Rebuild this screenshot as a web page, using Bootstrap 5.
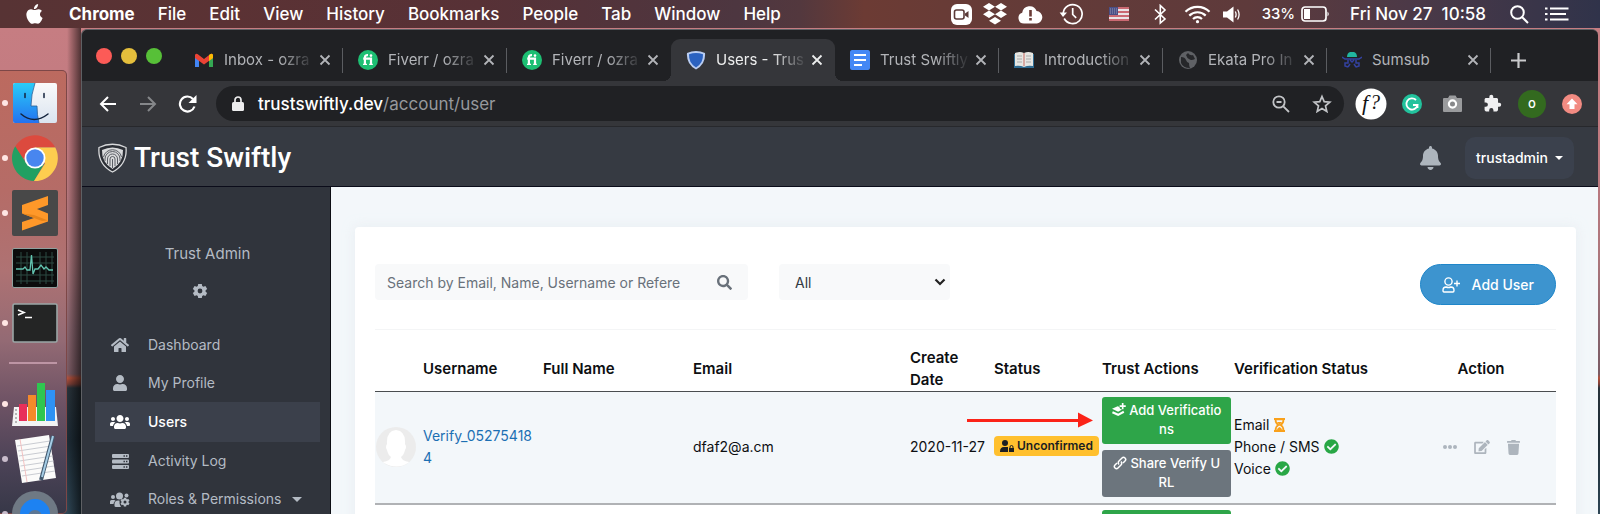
<!DOCTYPE html>
<html lang="en">
<head>
<meta charset="utf-8">
<meta name="viewport" content="width=device-width, initial-scale=1">
<title>Users - Trust Swiftly</title>
<link href="https://cdn.jsdelivr.net/npm/bootstrap@5.3.0/dist/css/bootstrap.min.css" rel="stylesheet">
<style>
  body { font-family: Inter, "Liberation Sans", sans-serif; font-size: 15px; line-height: 22px; color: #0d0f12; }
  svg { display: block; flex: none; }
  .desktop { height: 100vh; overflow: hidden; background: linear-gradient(#c67d82 28px, #c07a80 150px, #ac767c 260px, #8a6670 330px, #7b5b64 374px, #b4513c 378px, #7e4038 384px, #29333b 388px, #1e2c36 440px, #2f4655 100%); }
  .menubar { height: 28px; padding-left: 26px; padding-right: 29px; color: #fff; font-size: 17px; font-weight: 500; white-space: nowrap;
    background: linear-gradient(90deg, #573334, #5b3234 14%, #573136 30%, #4d3640 46%, #53383e 50%, #6c3b34 54%, #643b38 64%, #5e3a3b 78%, #4c3947 88%, #30334a); }
  .menubar a, .side-nav a { color: inherit; text-decoration: none; }
  .menus { gap: 23px; margin-left: 26px; }
  .dock { width: 67px; margin-top: 42px; padding-top: 4px; border: 1px solid #7d4747; border-left: 0; border-radius: 0 5px 5px 0;
    background: linear-gradient(#bc6a5f, #b56c67 120px, #ae7273 200px, #936a74 270px, #6f5365 330px, #4c4357 390px, #363747 445px); }
  .dock-item { height: 55px; padding-left: 2px; gap: 4px; }
  .running { width: 6px; height: 6px; border-radius: 50%; background: #ffe6e4; flex: none; }
  .running.idle { visibility: hidden; }
  .running.soft { background: #c9bccb; }
  .dock-rule { height: 2px; margin: 12px 9px; background: #bd95a4; }
  .mountain { width: 14px; background: linear-gradient(90deg, transparent, #0009); }
  .window { margin: 1px 2px 0 0; border: 1px solid #5e6064; border-bottom: 0; border-right: 0; border-radius: 6px 6px 0 0; overflow: hidden; background: #202124; }
  .tabstrip { height: 51px; }
  .lights { width: 97px; padding-left: 14px; gap: 9px; }
  .lights button { width: 16px; height: 16px; border: 0; padding: 0; border-radius: 50%; }
  .browser-tab { flex: 0 1 164px; min-width: 0; height: 42px; padding: 0 12px 0 15px; gap: 10px; color: #b2b4b8; font-size: 15px; position: relative; }
  .browser-tab .label { flex: 1 1 0; margin-right: -8px; overflow: hidden; white-space: nowrap; -webkit-mask-image: linear-gradient(90deg, #000 60%, transparent 98%); mask-image: linear-gradient(90deg, #000 60%, transparent 98%); }
  .browser-tab .label.full { -webkit-mask-image: none; mask-image: none; }
  .browser-tab.ruled::after { content: ""; position: absolute; right: 0; top: 9px; height: 25px; width: 1px; background: #5b5d61; }
  .browser-tab.current { background: #35363a; color: #eceded; border-radius: 9px 9px 0 0; }
  .browser-tab.current::before, .browser-tab.current::after { content: ""; position: absolute; bottom: 0; width: 8px; height: 8px; }
  .browser-tab.current::before { left: -8px; background: radial-gradient(circle at 0 0, transparent 8px, #35363a 8px); }
  .browser-tab.current::after { right: -8px; background: radial-gradient(circle at 100% 0, transparent 8px, #35363a 8px); }
  .bare { border: 0; padding: 0; background: none; color: inherit; }
  .new-tab { height: 42px; margin-left: 19px; }
  .toolbar { height: 45px; background: #35363a; padding: 0 11px 0 16px; }
  .toolbar .nav-buttons { gap: 20px; margin-right: 18px; }
  .omnibox { height: 35px; border-radius: 18px; background: #202124; padding: 0 12px; font-size: 17px; color: #96989c; }
  .omnibox b { font-weight: 500; color: #fff; }
  .lock { margin: 0 14px 0 4px; }
  .extensions { margin-left: 11px; gap: 10px; }
  .ext-slot { width: 30px; height: 30px; display: flex; align-items: center; justify-content: center; }
  .app-header { height: 61px; border-top: 1px solid #27282c; border-bottom: 1px solid #0b0c1a; background: #363a42; padding: 2px 24px 0 16px; }
  .brand { font: 500 28px/32px Roboto, sans-serif; color: #fff; text-decoration: none; gap: 7px; }
  .account-btn { background: #3b414d; color: #fff; border-radius: 10px; padding: 10px 11px; font-size: 14px; font-weight: 500; line-height: 22px; border: 0; }
  .account-btn::after { margin-left: 7px; vertical-align: 3px; }
  .sidebar { width: 249px; flex: none; background: #30343c; border-right: 1px solid #0d0e14; padding: 55px 10px 0 13px; color: #b4bbc4; }
  .sidebar .owner { line-height: 24px; }
  .gear { margin-top: 17px; padding-right: 16px; }
  .side-nav { margin-top: 27px; font-size: 14px; }
  .side-nav a { height: 38px; padding-left: 14px; gap: 17px; }
  .side-nav a.current { height: 40px; background: #3b404b; color: #fff; font-weight: 500; }
  .side-icon { width: 22px; display: flex; justify-content: center; }
  .caret { border: 5px solid transparent; border-top-color: currentColor; border-bottom: 0; margin-left: -6px; }
  .content { background: #f3f7fa; padding: 40px 22px 0 24px; }
  .panel { background: #fff; border-radius: 4px; padding: 37px 20px 0; box-shadow: 0 0 12px #dfe6ec90; min-height: 100%; }
  .search-box { width: 373px; background: #f8f9fa; border-radius: 4px; }
  .search-box input { height: 36px; border: 0; background: transparent; padding: 0 12px; font-size: 14px; color: #495057; box-shadow: none; }
  .search-box input::placeholder { color: #69717a; opacity: 1; }
  .filter { width: 171px; height: 36px; margin-left: 31px; border: 0; border-radius: 4px; padding: 0 16px; font-size: 14px; color: #333a42;
    background: #f8f9fa url("data:image/svg+xml,%3Csvg xmlns='http://www.w3.org/2000/svg' viewBox='0 0 12 8'%3E%3Cpath d='M1.500 1.500 6 6l4.500-4.500' fill='none' stroke='%23222' stroke-width='2.200'/%3E%3C/svg%3E") no-repeat right 4px center / 12px 8px; }
  .add-user { height: 41px; border: 1px solid #1f86c9; border-radius: 21px; background: #3d94cf; color: #fff; font-size: 14px; font-weight: 500; padding: 0 21px; gap: 12px; }
  .split { height: 1px; background: #f4f5f6; margin: 24px 0 12px; }
  .users { table-layout: fixed; width: 100%; margin: 0; font-size: 14px; }
  .users th { padding: 5px 0 0; font-size: 15px; font-weight: 600; vertical-align: middle; }
  .users thead tr { border-bottom: 1px solid #4a4d50; }
  .users td { padding: 5px 0 6px; vertical-align: middle; }
  .users tbody tr { border-bottom: 2px solid #b0b2b5; }
  .users tbody tr:nth-child(odd) { background: #f3f7fa; }
  .users td a { color: #1c6fb3; text-decoration: none; }
  .c-avatar { width: 48px; } .c-user { width: 120px; } .c-name { width: 150px; } .c-date { width: 84px; }
  .c-status { width: 108px; } .c-trust { width: 132px; } .c-verify { width: 172px; } .c-action { width: 150px; }
  .unconfirmed { display: inline-flex; align-items: center; gap: 3px; height: 20px; padding: 0 6px; border-radius: 4px; background: #ffc02e; color: #1b1e22; font-size: 12px; font-weight: 600; }
  .trust-btn { display: block; width: 129px; border-radius: 3px; padding: 4px 5px 5px; color: #fff; font-size: 13px; font-weight: 500; line-height: 19px; border: 0; }
  .trust-btn svg, .verify-line svg { display: inline-block; vertical-align: -2px; }
  .t-green { background: #2ea549; } .t-gray { background: #6c757d; margin-top: 6px; }
  .actions { gap: 17px; color: #adb5bd; }
  .pointer-cell { position: relative; }
  .pointer { position: absolute; left: 57px; top: 20px; }
  .gap-a { margin-left: 12px; } .gap-b { margin-right: 21px; } .gap-c { margin-left: 6px; } .gap-d { margin-right: 22px; }
</style>
</head>
<body>
<svg width="0" height="0" class="position-absolute" aria-hidden="true">
  <symbol id="x" viewBox="0 0 12 12"><path d="M1.500 1.500l9 9M10.500 1.500l-9 9" stroke="currentColor" stroke-width="1.800"/></symbol>
  <symbol id="fiverr" viewBox="0 0 20 20"><circle cx="10" cy="10" r="10" fill="#1dbf73"/><path d="M5.200 8.600H13v6M6.900 15V7.400c0-1.600 1-2.400 3.100-2.200" fill="none" stroke="#fff" stroke-width="2.200"/><path d="M5 14.400h4M11.200 14.400h3.600" stroke="#fff" stroke-width="1.200"/><circle cx="13" cy="5.600" r="1.300" fill="#fff"/></symbol>
  <symbol id="user" viewBox="0 0 448 512"><path fill="currentColor" d="M224 256c70.700 0 128-57.300 128-128S294.700 0 224 0 96 57.300 96 128s57.300 128 128 128zm89.600 32h-16.700c-22.200 10.200-46.900 16-72.900 16s-50.600-5.800-72.900-16h-16.700C60.200 288 0 348.200 0 422.400V464c0 26.500 21.500 48 48 48h352c26.500 0 48-21.500 48-48v-41.600c0-74.200-60.200-134.400-134.400-134.400z"/></symbol>
  <symbol id="search" viewBox="0 0 512 512"><path fill="currentColor" d="M505 442.700L405.300 343c-4.500-4.500-10.600-7-17-7H372c27.600-35.300 44-79.700 44-128C416 93.100 322.900 0 208 0S0 93.100 0 208s93.100 208 208 208c48.300 0 92.700-16.400 128-44v16.300c0 6.400 2.500 12.500 7 17l99.700 99.700c9.400 9.400 24.600 9.400 33.900 0l28.300-28.300c9.400-9.400 9.400-24.600.1-34zM208 336c-70.700 0-128-57.200-128-128 0-70.700 57.200-128 128-128 70.700 0 128 57.200 128 128 0 70.700-57.200 128-128 128z"/></symbol>
  <symbol id="check" viewBox="0 0 512 512"><path fill="#28a745" d="M504 256c0 136.967-111.033 248-248 248S8 392.967 8 256 119.033 8 256 8s248 111.033 248 248zM227.314 387.314l184-184c6.248-6.248 6.248-16.379 0-22.627l-22.627-22.627c-6.248-6.249-16.379-6.249-22.628 0L216 308.118l-70.059-70.059c-6.248-6.248-16.379-6.248-22.628 0l-22.627 22.627c-6.248 6.248-6.248 16.379 0 22.627l104 104c6.249 6.249 16.379 6.249 22.628.001z"/></symbol>
  <symbol id="cog" viewBox="0 0 16 16"><path fill="currentColor" fill-rule="evenodd" d="M6.200 1h3.600l.4 2 1.200.7 2-.7 1.800 3-1.600 1.300v1.400l1.600 1.300-1.800 3-2-.7-1.200.7-.4 2H6.200l-.4-2-1.200-.7-2 .7-1.800-3 1.600-1.300V7.300L.8 6l1.800-3 2 .7L5.800 3zM8 5.600a2.400 2.400 0 1 0 0 4.800 2.400 2.400 0 0 0 0-4.800z"/></symbol>
  <symbol id="stack" viewBox="0 0 16 16"><path fill="currentColor" d="M0 6.500l6.500-2.800 2 .8c.2 1.600 1.200 2.600 3 3L7 10z"/><path d="M.5 10.500L7 13.500l6.500-3.500" fill="none" stroke="currentColor" stroke-width="2.400"/><path d="M12.200 0v7M8.700 3.500h7" stroke="currentColor" stroke-width="1.900"/></symbol>
</svg>

<div class="desktop d-flex flex-column">
  <nav class="menubar d-flex align-items-center flex-shrink-0" aria-label="System menu">
    <svg width="17" height="21" viewBox="0 0 17 21" fill="#fff"><path d="M12.100 0c.1 1.300-.4 2.500-1.100 3.400C10.200 4.400 9.100 5 8 5c-.2-1.200.4-2.500 1.100-3.300C9.900.7 11.100.1 12.100 0zM15.900 7.100c-2.900 1.900-2.300 5.700.7 6.900-.6 1.700-1.400 3.200-2.500 4.600-1.700 1.900-2.700.7-4.800.6-2.100 0-3 1.500-4.800 0C2.200 17.300.6 14 .4 11.200c-.2-3.400 1.700-5.900 4.600-6 1.500 0 2.600.9 3.600.9 1.200 0 2.500-1.100 4.300-.9 1.100.1 2.300.7 3 1.900z"/></svg>
    <div class="menus d-flex">
      <a href="#" class="fw-bold">Chrome</a><a href="#">File</a><a href="#">Edit</a><a href="#">View</a><a href="#">History</a><a href="#">Bookmarks</a><a href="#">People</a><a href="#">Tab</a><a href="#">Window</a><a href="#">Help</a>
    </div>
    <div class="d-flex align-items-center ms-auto">
      <svg width="21" height="21" viewBox="0 0 21 21"><rect width="21" height="21" rx="6" fill="#fff"/><rect x="3.500" y="6" width="9.500" height="9" rx="2" fill="none" stroke="#5b3a38" stroke-width="1.600"/><path d="M14 9.500l3.500-2.600v7.200L14 11.500z" fill="#5b3a38"/></svg>
      <svg class="mx-2" width="30" height="22" viewBox="-3 0 30 22" fill="#fff"><path d="M6 0l6 3.700-6 3.700-6-3.700zM18 0l6 3.700-6 3.700-6-3.700zM6 7.600l6 3.700L6 15l-6-3.700zM18 7.600l6 3.700-6 3.700-6-3.700zM12 14l6 3.700-6 3.800-6-3.800z"/></svg>
      <svg width="25" height="19" viewBox="0 0 25 19"><path d="M6 18.500a5.500 5.500 0 0 1-1.800-10.700A7.500 7.500 0 0 1 18.600 6 6.300 6.300 0 0 1 19 18.500z" fill="#fff"/><path d="M12.500 5v6.500M12.500 13v2.600" stroke="#6a3b36" stroke-width="2.600"/></svg>
      <svg class="ms-3" width="26" height="22" viewBox="0 0 26 22" fill="none" stroke="#fff" stroke-width="1.700"><path d="M5.200 15.500A9.500 9.500 0 1 0 4.200 10"/><path d="M.6 9.500h7.400L4 14z" fill="#fff" stroke="none"/><path d="M13.700 5v6.500l3.500 3.400"/></svg>
      <svg class="ms-4" width="20" height="14" viewBox="0 0 20 14"><rect width="20" height="14" fill="#e9e4e6"/><path d="M0 1h20M0 5h20M0 9h20M0 13h20" stroke="#c0404c" stroke-width="1.600"/><rect width="9" height="8" fill="#4a4f86"/><path d="M1 2h7M1 4h7M1 6h7" stroke="#aab" stroke-width=".8" stroke-dasharray="1"/></svg>
      <svg class="ms-4" width="15" height="21" viewBox="0 0 15 21" fill="none" stroke="#fff" stroke-width="1.600"><path d="M2 5.500l10 9.500-4.700 4V1.500L12 6 2 15.500"/></svg>
      <svg class="ms-3" width="27" height="19" viewBox="0 0 27 19" fill="none" stroke="#fff" stroke-width="2.200"><path d="M1.500 6.800a17 17 0 0 1 24 0M5.300 10.600a11.700 11.700 0 0 1 16.400 0M9 14a6.500 6.500 0 0 1 9 0"/><circle cx="13.500" cy="16.700" r="1.600" fill="#fff" stroke="none"/></svg>
      <svg class="gap-a gap-b" width="18" height="17" viewBox="0 0 18 17"><path d="M0 5.500h4L10.500.5v16L4 11.500H0z" fill="#fff"/><path d="M12.300 5.500q1.600 3 0 6M14.600 3.500q3 5 0 10" fill="none" stroke="#fff" stroke-width="1.300"/></svg>
      <small>33%</small>
      <svg class="gap-c" width="29" height="16" viewBox="0 0 29 16"><rect x="1" y="1" width="24" height="14" rx="3" fill="none" stroke="#fff" stroke-width="1.700"/><rect x="3" y="3" width="6" height="10" fill="#fff"/><path d="M26.500 5.500q2.500 2.500 0 5z" fill="#fff"/></svg>
      <span class="ms-3 ps-1">Fri Nov 27&nbsp; 10:58</span>
      <svg class="ms-4" width="19" height="19" viewBox="0 0 19 19" fill="none" stroke="#fff" stroke-width="2"><circle cx="7.500" cy="7.500" r="6.300"/><path d="M12 12l6 6"/></svg>
      <svg class="ms-3" width="26" height="14" viewBox="0 0 26 14" stroke="#fff" stroke-width="2"><path d="M0 1.500h2.500M0 7h2.500M0 12.500h2.500M5 1.500h18.500M5 7h16M5 12.500h18.500"/></svg>
    </div>
  </nav>

  <div class="d-flex flex-grow-1 overflow-hidden">
    <aside class="dock flex-shrink-0" aria-label="Dock">
      <div class="dock-item d-flex align-items-center"><i class="running"></i>
        <svg width="46" height="46" viewBox="0 0 46 46"><defs><linearGradient id="fa" x2="0" y2="1"><stop stop-color="#29cdf8"/><stop offset="1" stop-color="#2472f0"/></linearGradient><linearGradient id="fb" x2="0" y2="1"><stop stop-color="#fafafa"/><stop offset="1" stop-color="#dae4f0"/></linearGradient></defs><rect x="1" y="3" width="44" height="40" rx="2" fill="url(#fb)"/><path d="M3 3h20q-4 12-4 23h6q0 9 2 17H3q-2 0-2-2V5q0-2 2-2z" fill="url(#fa)"/><path d="M23 3q-4 12-4 23h6q0 9 2 17" fill="none" stroke="#2b5f96" stroke-width=".8"/><path d="M13 13.500v4M32 13.500v4M9 34q13 11 27 0" fill="none" stroke="#13233c" stroke-width="1.500" stroke-linecap="round"/></svg></div>
      <div class="dock-item d-flex align-items-center"><i class="running"></i>
        <svg width="46" height="46" viewBox="0 0 46 46"><path d="M23 23H3.500V11A23 23 0 0 1 43 12H23z" fill="#dc4a3e"/><path d="M3.200 11.300A23 23 0 0 0 22 46l10-17-18-1z" fill="#21a062"/><path d="M43.300 12.500H23l10 16-11 17.500A23 23 0 0 0 43.300 12.500z" fill="#fdcd4f"/><circle cx="23" cy="23" r="10.500" fill="#fff"/><circle cx="23" cy="23" r="8.700" fill="#4886ef"/></svg></div>
      <div class="dock-item d-flex align-items-center"><i class="running"></i>
        <svg width="46" height="46" viewBox="0 0 46 46"><rect width="46" height="46" rx="2" fill="#484848"/><path d="M10 15l26-9v9L25 19l11 4.500v8L10 40.500V32l12-4-12-4.500z" fill="#ff9829"/><path d="M10 23.500L22 28l8 3 6-.5-14-5.500z" fill="#e8851b"/></svg></div>
      <div class="dock-item d-flex align-items-center"><i class="running idle"></i>
        <svg width="46" height="40" viewBox="0 0 46 40"><rect x=".5" y=".5" width="45" height="39" rx="1.500" fill="#0b0c0c" stroke="#8fa09d"/><path d="M4 9h38M4 15h38M4 27h38M4 33h38M9 4v32M15 4v32M28 4v32M34 4v32M40 4v32" stroke="#2c4a43" stroke-width="1"/><path d="M4 21h7l2-2 2 3h3l1.500-15 1.500 19 2-5h3l3-4 3 4 2-2 3 3h4" fill="none" stroke="#62c4b0" stroke-width="1.300"/></svg></div>
      <div class="dock-item d-flex align-items-center"><i class="running"></i>
        <svg width="46" height="40" viewBox="0 0 46 40"><rect x="1" y="1" width="44" height="38" rx="1.500" fill="#242525" stroke="#9aa6a6" stroke-width="1.600"/><path d="M6 7l6 2.500L6 12M13 14.500h7" fill="none" stroke="#fff" stroke-width="1.600"/></svg></div>
      <div class="dock-rule"></div>
      <div class="dock-item d-flex align-items-center"><i class="running"></i>
        <svg width="46" height="46" viewBox="0 0 46 46"><path d="M2 26h42l2 19H0z" fill="#f3f3f3"/><path d="M4 28v14" stroke="#777" stroke-dasharray="2"/><rect x="7" y="23" width="8" height="17" fill="#e8305a"/><rect x="16" y="14" width="8" height="26" fill="#f58a2a"/><rect x="25" y="2" width="8" height="38" fill="#2fc650"/><rect x="34" y="9" width="9" height="31" fill="#2e92f4"/></svg></div>
      <div class="dock-item d-flex align-items-center"><i class="running soft"></i>
        <svg width="46" height="50" viewBox="0 0 46 50"><path d="M3 6l34-5 7 43-34 5z" fill="#fbfbfa"/><path d="M5 12l33-5M6 17l33-5M7 22l33-5M7.500 27l33-5M8.500 32l33-5M9 37l33-5M10 42l33-5" stroke="#c9ccd2" stroke-width="1"/><path d="M8 5l7 43" stroke="#f3c2c2"/><path d="M41 2L29 46" stroke="#42586e" stroke-width="4"/><path d="M41 2L30 43" stroke="#a5cde6" stroke-width="2"/></svg></div>
      <div class="dock-item d-flex align-items-center"><i class="running soft"></i>
        <svg width="46" height="46" viewBox="0 0 46 46"><circle cx="23" cy="23" r="23" fill="#6f7984"/><circle cx="23" cy="23" r="15" fill="#1d82f2"/><circle cx="23" cy="26" r="7" fill="#5c7795"/></svg></div>
    </aside>
    <div class="mountain flex-shrink-0" aria-hidden="true"></div>

    <div class="window flex-grow-1 d-flex flex-column">
      <div class="tabstrip d-flex align-items-end flex-shrink-0">
        <div class="lights d-flex align-items-center align-self-stretch flex-shrink-0">
          <button style="background:#fc5b57" aria-label="Close"></button><button style="background:#e5bf3c" aria-label="Minimize"></button><button style="background:#57c038" aria-label="Zoom"></button>
        </div>
        <div class="browser-tab ruled d-flex align-items-center"><svg width="20" height="14" viewBox="0 0 20 14"><path d="M1 2v12h4V6z" fill="#4285f4"/><path d="M19 2v12h-4V6z" fill="#34a853"/><path d="M1 2.500Q1 0 3.500 1L10 6l6.500-5Q19 0 19 2.500V5l-9 6.500L1 5z" fill="#ea4335"/><path d="M15 2l1.500-1Q19 0 19 2.500V5l-4 3z" fill="#fbbc04"/></svg><span class="label">Inbox - ozra</span><button class="bare" aria-label="Close tab"><svg width="12" height="12"><use href="#x"/></svg></button></div>
        <div class="browser-tab ruled d-flex align-items-center"><svg width="20" height="20"><use href="#fiverr"/></svg><span class="label">Fiverr / ozra</span><button class="bare" aria-label="Close tab"><svg width="12" height="12"><use href="#x"/></svg></button></div>
        <div class="browser-tab d-flex align-items-center"><svg width="20" height="20"><use href="#fiverr"/></svg><span class="label">Fiverr / ozra</span><button class="bare" aria-label="Close tab"><svg width="12" height="12"><use href="#x"/></svg></button></div>
        <div class="browser-tab current d-flex align-items-center"><svg width="20" height="20" viewBox="0 0 20 20"><path d="M1 3q9-4 18 0 1 11-9 16.500Q0 14 1 3z" fill="#b9cdf2"/><path d="M3 4.300q7-2.800 14 0 .5 8.700-7 13.200Q2.500 13 3 4.300z" fill="#2b62c0"/></svg><span class="label">Users - Trus</span><button class="bare" aria-label="Close tab"><svg width="12" height="12"><use href="#x"/></svg></button></div>
        <div class="browser-tab ruled d-flex align-items-center"><svg width="20" height="20" viewBox="0 0 20 20"><rect width="20" height="20" rx="2" fill="#4487f5"/><path d="M4 5h12M4 10h12M4 15h8" stroke="#fff" stroke-width="2.200"/></svg><span class="label">Trust Swiftly</span><button class="bare" aria-label="Close tab"><svg width="12" height="12"><use href="#x"/></svg></button></div>
        <div class="browser-tab ruled d-flex align-items-center"><svg width="20" height="16" viewBox="0 0 20 16"><path d="M0 2h20v14H0z" fill="#2f6c93"/><path d="M1 1q5-2 9 0 4-2 9 0v13q-5-1-9 1-4-2-9-1z" fill="#e6e6e2"/><path d="M3 4h5M3 7h5M3 10h5M12 4h5M12 7h5M12 10h5" stroke="#aaa"/><path d="M10 1v13" stroke="#c86a62"/></svg><span class="label">Introduction</span><button class="bare" aria-label="Close tab"><svg width="12" height="12"><use href="#x"/></svg></button></div>
        <div class="browser-tab ruled d-flex align-items-center"><svg width="20" height="20" viewBox="0 0 20 20"><circle cx="10" cy="10" r="9" fill="#5f6165"/><path d="M3 7q4 0 5 3t3 3q0 3 1 5-7 0-9-5zM10 3q2 3 5 2l2 4q-4 2-6 0-2-1-3-4z" fill="#26272a"/></svg><span class="label">Ekata Pro In</span><button class="bare" aria-label="Close tab"><svg width="12" height="12"><use href="#x"/></svg></button></div>
        <div class="browser-tab ruled d-flex align-items-center"><svg width="20" height="16" viewBox="0 0 20 16"><path d="M5 5q0-4 3-5h4q3 1 3 5z" fill="#21b5a0"/><path d="M0 5l3 2h14l3-2M6 8v3H3v3l3 1M14 8v3h3v3l-3 1M8 8l2 2 2-2M8 12l-2 3M12 12l2 3" fill="none" stroke="#3341a0" stroke-width="1.500"/></svg><span class="label full">Sumsub</span><button class="bare" aria-label="Close tab"><svg width="12" height="12"><use href="#x"/></svg></button></div>
        <button class="bare new-tab" aria-label="New tab"><svg width="17" height="17" viewBox="0 0 17 17"><path d="M8.500 1v15M1 8.500h15" stroke="#c9cacc" stroke-width="2.200"/></svg></button>
      </div>

      <div class="toolbar d-flex align-items-center flex-shrink-0">
        <div class="nav-buttons d-flex align-items-center text-white">
          <button class="bare" aria-label="Back"><svg width="20" height="18" viewBox="0 0 20 18"><path d="M18 9H3M10 2L3 9l7 7" fill="none" stroke="#fff" stroke-width="2"/></svg></button>
          <button class="bare" aria-label="Forward"><svg width="20" height="18" viewBox="0 0 20 18"><path d="M2 9h15M10 2l7 7-7 7" fill="none" stroke="#85878a" stroke-width="2"/></svg></button>
          <button class="bare" aria-label="Reload"><svg width="20" height="18" viewBox="0 0 20 18"><path d="M16.500 11.500A7.500 7.500 0 1 1 15 4" fill="none" stroke="#fff" stroke-width="2.200"/><path d="M18.500 0v8h-8z" fill="#fff"/></svg></button>
        </div>
        <div class="omnibox flex-grow-1 d-flex align-items-center">
          <svg class="lock" width="12" height="16" viewBox="0 0 12 16"><rect y="6" width="12" height="9" rx="1.500" fill="#ededee"/><path d="M3 7V4a3 3 0 0 1 6 0v3" fill="none" stroke="#ededee" stroke-width="1.700"/></svg>
          <span><b>trustswiftly.dev</b>/account/user</span>
          <div class="ms-auto d-flex align-items-center text-light">
            <svg class="gap-d" width="18" height="18" viewBox="0 0 18 18" fill="none" stroke="#c2c4c7" stroke-width="1.800"><circle cx="7" cy="7" r="5.700"/><path d="M4.500 7h5M11.300 11.300L17 17"/></svg>
            <svg width="20" height="20" viewBox="0 0 20 20"><path d="M10 2.500l2.200 5.200 5.600.5-4.300 3.700 1.300 5.500L10 14.500l-4.800 2.900 1.300-5.500L2.200 8.200l5.600-.5z" fill="none" stroke="#c2c4c7" stroke-width="1.700"/></svg>
          </div>
        </div>
        <div class="extensions d-flex align-items-center">
          <svg width="32" height="32" viewBox="0 0 32 32"><circle cx="16" cy="16" r="15.500" fill="#fff"/><text x="7" y="22" font-family="Liberation Serif, serif" font-size="22" font-style="italic" font-weight="500" fill="#111">f</text><text x="15" y="21" font-family="Liberation Serif, serif" font-size="20" font-style="italic" fill="#111">?</text></svg>
          <span class="ext-slot"><svg width="20" height="20" viewBox="0 0 20 20"><circle cx="10" cy="10" r="10" fill="#22c29c"/><path d="M14 6a5.600 5.600 0 1 0 1.500 5H11M15.500 10.500V14" fill="none" stroke="#fff" stroke-width="1.800"/></svg></span>
          <span class="ext-slot"><svg width="19" height="17" viewBox="0 0 19 17"><path d="M5 3l1.500-2.500h6L14 3h4q1 0 1 1v12q0 1-1 1H1q-1 0-1-1V4q0-1 1-1z" fill="#9a9b9d"/><circle cx="9.500" cy="9" r="3.600" fill="#88898b" stroke="#fff" stroke-width="2.200"/></svg></span>
          <span class="ext-slot"><svg width="19" height="19" viewBox="0 0 24 24"><path d="M20.500 11H19V7c0-1.100-.9-2-2-2h-4V3.500a2.500 2.500 0 0 0-5 0V5H4c-1.100 0-2 .9-2 2v3.800h1.500a2.700 2.700 0 0 1 0 5.400H2V20c0 1.100.9 2 2 2h3.800v-1.500a2.700 2.700 0 0 1 5.400 0V22H17c1.100 0 2-.9 2-2v-4h1.500a2.500 2.500 0 0 0 0-5z" fill="#f0f0f1"/></svg></span>
          <svg width="30" height="30" viewBox="0 0 30 30"><circle cx="15" cy="15" r="14" fill="#336a1f"/><text x="15" y="19" text-anchor="middle" font-size="13" font-weight="500" fill="#fff">o</text></svg>
          <svg width="30" height="20" viewBox="-5 0 30 20"><circle cx="10" cy="10" r="10" fill="#f28b82"/><path d="M10 4.500l5.500 5.700h-3V15h-5v-4.800h-3z" fill="#fff"/></svg>
        </div>
      </div>

      <header class="app-header d-flex align-items-center flex-shrink-0">
        <a href="#" class="brand d-flex align-items-center">
          <svg width="29" height="30" viewBox="0 0 29 30" fill="none"><path d="M1 4.500Q14.500-2 28 4.500 29.500 21 14.500 29-.5 21 1 4.500z" fill="#2b2e35" stroke="#d8d9db" stroke-width="1.300"/><path d="M4 7q10.500-5 21 0 .5 12.500-10.500 19Q3.500 19.500 4 7z" fill="#d9dadc"/><path d="M5.500 14a9.200 9.200 0 0 1 18 0M7 18v-2a7.500 7.500 0 0 1 15 0v2M9.500 21v-5a5 5 0 0 1 10 0v5M12 23v-7a2.500 2.500 0 0 1 5 0v7M14.500 16v9" stroke="#4c4f56" stroke-width=".9"/></svg>
          Trust Swiftly</a>
        <button class="bare ms-auto me-4" aria-label="Notifications"><svg width="21" height="24" viewBox="0 0 448 512"><path fill="#adb5bd" d="M224 512c35.320 0 63.970-28.650 63.970-64H160.030c0 35.350 28.650 64 63.970 64zm215.390-149.710c-19.320-20.760-55.470-51.990-55.470-154.290 0-77.700-54.480-139.900-127.940-155.160V32c0-17.670-14.320-32-31.980-32s-31.980 14.330-31.980 32v20.840C118.560 68.100 64.080 130.300 64.080 208c0 102.300-36.150 133.530-55.470 154.290-6 6.450-8.660 14.160-8.610 21.710.11 16.400 12.980 32 32.100 32h383.800c19.120 0 32-15.600 32.100-32 .05-7.550-2.610-15.270-8.610-21.710z"/></svg></button>
        <button class="account-btn dropdown-toggle">trustadmin</button>
      </header>

      <div class="d-flex flex-grow-1 overflow-hidden">
        <nav class="sidebar" aria-label="Admin">
          <div class="owner text-center">Trust Admin</div>
          <button class="bare gear d-block mx-auto" aria-label="Settings"><svg width="16" height="16"><use href="#cog"/></svg></button>
          <div class="side-nav">
            <a href="#" class="d-flex align-items-center"><span class="side-icon"><svg width="18" height="16" viewBox="0 0 576 512"><path fill="currentColor" d="M280.370 148.260L96 300.110V464a16 16 0 0 0 16 16l112.060-.29a16 16 0 0 0 15.920-16V368a16 16 0 0 1 16-16h64a16 16 0 0 1 16 16v95.640a16 16 0 0 0 16 16.050L464 480a16 16 0 0 0 16-16V300L295.670 148.260a12.190 12.190 0 0 0-15.300 0zM571.600 251.470L488 182.560V44.050a12 12 0 0 0-12-12h-56a12 12 0 0 0-12 12v72.610L318.470 43a48 48 0 0 0-61 0L4.340 251.470a12 12 0 0 0-1.600 16.900l25.500 31A12 12 0 0 0 45.150 301l235.220-193.740a12.190 12.190 0 0 1 15.300 0L530.900 301a12 12 0 0 0 16.900-1.600l25.500-31a12 12 0 0 0-1.700-16.930z"/></svg></span>Dashboard</a>
            <a href="#" class="d-flex align-items-center"><span class="side-icon"><svg width="14" height="16"><use href="#user"/></svg></span>My Profile</a>
            <a href="#" class="current d-flex align-items-center"><span class="side-icon"><svg width="20" height="16" viewBox="0 0 640 512"><path fill="currentColor" d="M96 224c35.300 0 64-28.700 64-64s-28.700-64-64-64-64 28.700-64 64 28.700 64 64 64zm448 0c35.300 0 64-28.700 64-64s-28.700-64-64-64-64 28.700-64 64 28.700 64 64 64zm32 32h-64c-17.600 0-33.500 7.100-45.100 18.600 40.300 22.100 68.900 62 75.100 109.400h66c17.700 0 32-14.300 32-32v-32c0-35.300-28.700-64-64-64zm-256 0c61.900 0 112-50.100 112-112S381.900 32 320 32 208 82.100 208 144s50.100 112 112 112zm76.800 32h-8.300c-20.800 10-43.900 16-68.500 16s-47.600-6-68.500-16h-8.300C179.600 288 128 339.600 128 403.200V432c0 26.500 21.500 48 48 48h288c26.500 0 48-21.500 48-48v-28.800c0-63.600-51.600-115.200-115.200-115.200zm-223.700-13.400C161.500 263.100 145.600 256 128 256H64c-35.300 0-64 28.700-64 64v32c0 17.700 14.300 32 32 32h65.900c6.300-47.400 34.900-87.300 75.200-109.400z"/></svg></span>Users</a>
            <a href="#" class="d-flex align-items-center"><span class="side-icon"><svg width="17" height="15" viewBox="0 0 17 15" fill="currentColor"><rect width="17" height="4" rx="1"/><rect y="5.500" width="17" height="4" rx="1"/><rect y="11" width="17" height="4" rx="1"/><path d="M11.500 2h1.400M14 2h1.400M11.500 7.500h1.400M14 7.500h1.400M11.500 13h1.400M14 13h1.400" stroke="#30343c" stroke-width="1.300"/></svg></span>Activity Log</a>
            <a href="#" class="d-flex align-items-center"><span class="side-icon"><svg width="20" height="15" viewBox="0 0 20 15" fill="currentColor"><circle cx="3" cy="5" r="2"/><circle cx="9.500" cy="4" r="3.500"/><circle cx="16.500" cy="3.500" r="2"/><path d="M0 12V9.500Q0 8 1.500 8H4q1 0 1.500.5Q3.500 10 3.500 12zM4.500 14v-2q0-3.500 3.500-3.500h1.500Q9 12 11 15H6q-1.500 0-1.500-1z"/><svg x="10" y="5" width="10" height="10"><use href="#cog"/></svg></svg></span>Roles &amp; Permissions<i class="caret"></i></a>
          </div>
        </nav>

        <main class="content flex-grow-1">
          <div class="panel">
            <div class="d-flex align-items-start">
              <div class="search-box d-flex align-items-center">
                <input class="form-control" type="text" aria-label="Search users" placeholder="Search by Email, Name, Username or Refere">
                <button class="bare px-3" aria-label="Search"><svg width="15" height="15" color="#69717a"><use href="#search"/></svg></button>
              </div>
              <select class="form-select filter" aria-label="Status filter"><option>All</option></select>
              <button class="add-user d-flex align-items-center ms-auto"><svg width="18" height="16" viewBox="0 0 18 16" fill="none" stroke="#fff" stroke-width="1.400"><circle cx="6.500" cy="4.500" r="3.600"/><path d="M1 13.500q0-3.500 3-3.500 2.500 1 5 0 3 0 3 3.500 0 1.500-1 1.500H2q-1 0-1-1.500zM15 3.500v6M12 6.500h6"/></svg>Add User</button>
            </div>
            <div class="split"></div>
            <table class="users">
              <colgroup><col class="c-avatar"><col class="c-user"><col class="c-name"><col><col class="c-date"><col class="c-status"><col class="c-trust"><col class="c-verify"><col class="c-action"></colgroup>
              <thead><tr><th></th><th>Username</th><th>Full Name</th><th>Email</th><th>Create<br>Date</th><th>Status</th><th>Trust Actions</th><th>Verification Status</th><th class="text-center">Action</th></tr></thead>
              <tbody>
                <tr>
                  <td><svg width="42" height="42" viewBox="0 0 42 42"><circle cx="21" cy="21" r="20" fill="#ececec"/><path d="M8 36q7-1 8-5-3-2-4-7-2-3 0-6-1-13 9-14 10 1 9 14 2 3 0 6-1 5-4 7 1 4 8 5l-1 1q-11 7-24 0z" fill="#fff"/></svg></td>
                  <td><a href="#">Verify_05275418<br>4</a></td><td></td><td>dfaf2@a.cm</td>
                  <td class="pointer-cell">2020-11-27<svg class="pointer" width="126" height="16" viewBox="0 0 126 16"><path d="M0 8.500h114" stroke="#fb2318" stroke-width="3"/><path d="M111 .5l15 8-15 7z" fill="#fb2318"/></svg></td>
                  <td><span class="unconfirmed"><svg width="14" height="12" viewBox="0 0 14 12" fill="currentColor"><circle cx="5" cy="3" r="3"/><path d="M0 11.500Q0 7 4 7h4v5H0zM9 8h5v4H9z"/><path d="M10 8.500V7q0-1.500 1.500-1.500T13 7v1.500" fill="none" stroke="currentColor"/></svg>Unconfirmed</span></td>
                  <td><button class="trust-btn t-green"><svg width="14" height="14"><use href="#stack"/></svg> Add Verificatio<br>ns</button>
                    <button class="trust-btn t-gray"><svg width="14" height="14" viewBox="0 0 14 14" fill="none" stroke="#fff" stroke-width="1.500"><path d="M6 8.500q-1.500-2 0-3.500l3-3q1.500-1.500 3 0t0 3L10 7M8 5.500q1.500 2 0 3.500l-3 3q-1.500 1.500-3 0t0-3L4 7"/></svg> Share Verify U<br>RL</button></td>
                  <td><div class="verify-line">Email <svg width="13" height="14" viewBox="0 0 13 14"><path d="M1 1h11M1 13h11" stroke="#f9a11b" stroke-width="2"/><path d="M2.500 1.500q0 4 3 5.500-3 1.500-3 5.500h8q0-4-3-5.500 3-1.500 3-5.500z" fill="none" stroke="#f9a11b" stroke-width="1.700"/><path d="M4 4h5L6.500 7zM4 12q0-2 2.500-3Q9 10 9 12z" fill="#f9a11b"/></svg></div>
                    <div class="verify-line">Phone / SMS <svg width="15" height="15"><use href="#check"/></svg></div>
                    <div class="verify-line">Voice <svg width="15" height="15"><use href="#check"/></svg></div></td>
                  <td><div class="actions d-flex align-items-center justify-content-center">
                    <button class="bare" aria-label="More"><svg width="14" height="14" viewBox="0 0 14 14" fill="currentColor"><circle cx="2" cy="7" r="2"/><circle cx="7" cy="7" r="2"/><circle cx="12" cy="7" r="2"/></svg></button>
                    <button class="bare" aria-label="Edit"><svg width="16" height="14" viewBox="0 0 576 512"><path fill="currentColor" d="M402.600 83.200l90.200 90.200c3.800 3.800 3.800 10 0 13.800L274.400 405.600l-92.800 10.300c-12.400 1.400-22.900-9.100-21.500-21.500l10.300-92.800L388.800 83.200c3.800-3.800 10-3.800 13.800 0zm162-22.900l-48.800-48.800c-15.200-15.200-39.900-15.200-55.200 0l-35.400 35.400c-3.800 3.800-3.800 10 0 13.800l90.200 90.200c3.800 3.800 10 3.800 13.800 0l35.400-35.400c15.200-15.300 15.200-40 0-55.200zM384 346.200V448H64V128h229.800c3.200 0 6.200-1.300 8.500-3.500l40-40c7.600-7.600 2.200-20.500-8.500-20.500H48C21.500 64 0 85.500 0 112v352c0 26.500 21.500 48 48 48h352c26.500 0 48-21.500 48-48V306.200c0-10.700-12.900-16-20.500-8.500l-40 40c-2.200 2.300-3.500 5.300-3.500 8.500z"/></svg></button>
                    <button class="bare" aria-label="Delete"><svg width="13" height="15" viewBox="0 0 448 512"><path fill="currentColor" d="M432 32H312l-9.400-18.700A24 24 0 0 0 281.100 0H166.800a23.720 23.720 0 0 0-21.400 13.300L136 32H16A16 16 0 0 0 0 48v32a16 16 0 0 0 16 16h416a16 16 0 0 0 16-16V48a16 16 0 0 0-16-16zM53.200 467a48 48 0 0 0 47.900 45h245.800a48 48 0 0 0 47.900-45L416 128H32z"/></svg></button>
                  </div></td>
                </tr>
                <tr><td></td><td></td><td></td><td></td><td></td><td></td><td><button class="trust-btn t-green" aria-label="Add Verifications"><svg width="14" height="14"><use href="#stack"/></svg></button></td><td></td><td></td></tr>
              </tbody>
            </table>
          </div>
        </main>
      </div>
    </div>
  </div>
</div>
<script src="https://cdn.jsdelivr.net/npm/bootstrap@5.3.0/dist/js/bootstrap.bundle.min.js"></script>
</body>
</html>
